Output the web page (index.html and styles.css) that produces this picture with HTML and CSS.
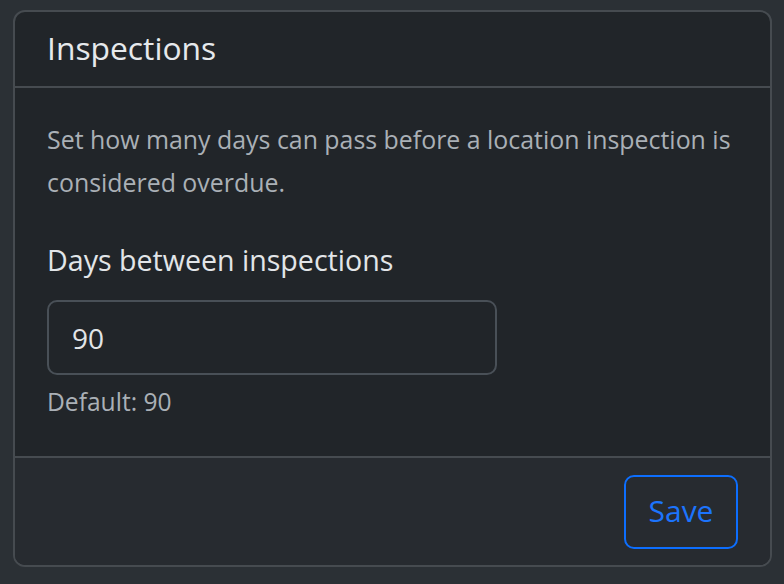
FILE: index.html
```html
<!DOCTYPE html>
<html lang="en">
<head>
<meta charset="utf-8">
<title>Inspections</title>
<link rel="stylesheet" href="styles.css">
</head>
<body>
  <div class="card">
    <div class="card-header">
      <h5 class="card-title">Inspections</h5>
    </div>
    <div class="card-body">
      <p class="card-text">Set how many days can pass before a location inspection is considered overdue.</p>
      <label class="form-label" for="days">Days between inspections</label>
      <input class="form-control" id="days" type="text" value="90">
      <div class="form-text">Default: 90</div>
    </div>
    <div class="card-footer">
      <button class="btn-save" type="button">Save</button>
    </div>
  </div>
</body>
</html>
```
FILE: styles.css
```css
* { box-sizing: border-box; }
html, body { margin: 0; }
body {
  background: #2b3035;
  padding: 10px 12px 17px 13px;
  font-family: "Open Sans", "Noto Sans", sans-serif;
  color: #dee2e6;
}
.card {
  background: #212529;
  border: 2px solid #464b50;
  border-radius: 12px;
  overflow: hidden;
}
.card-header {
  height: 76px;
  padding: 0 32px;
  display: flex;
  align-items: center;
  border-bottom: 2px solid #464b50;
}
.card-title {
  margin: 0 0 2px;
  font-size: 31.8px;
  font-weight: 400;
  color: #e6e9ec;
  line-height: 1.2;
}
.card-text {
  margin: 0 0 36px;
  font-size: 24.9px;
  line-height: 43px;
  color: #aab0b6;
}
.card-body {
  padding: 30px 32px 36px;
}
.form-label {
  display: block;
  font-size: 28.6px;
  line-height: 40px;
  margin-bottom: 20px;
  color: #e2e5e8;
}
.form-control {
  display: block;
  width: 450px;
  height: 75px;
  padding: 0 23px;
  background: #212529;
  border: 2px solid #495057;
  border-radius: 10px;
  color: #e2e5e8;
  font-family: inherit;
  font-size: 28px;
  outline: none;
}
.form-text {
  margin-top: 9px;
  font-size: 24.6px;
  line-height: 36px;
  color: #aab0b6;
}
.card-footer {
  background: #272b30;
  border-top: 2px solid #464b50;
  padding: 17px 32px 16px;
  display: flex;
  justify-content: flex-end;
}
.btn-save {
  width: 114px;
  height: 74px;
  background: transparent;
  border: 2px solid #0d6efd;
  border-radius: 10px;
  color: #1c74fd;
  font-family: inherit;
  font-size: 30px;
  line-height: 1;
  padding: 0 0 2px;
  cursor: pointer;
}
```
